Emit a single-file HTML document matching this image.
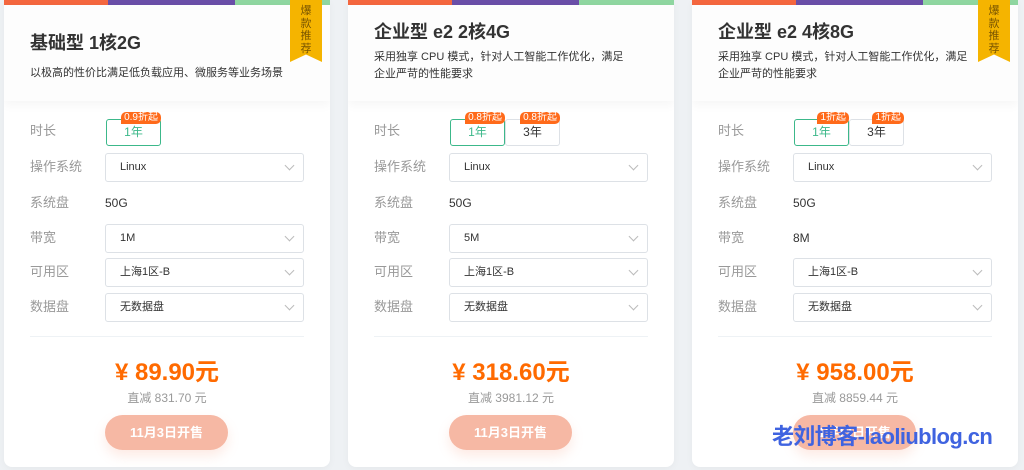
<!DOCTYPE html><html><head><meta charset="utf-8"><style>
*{margin:0;padding:0;box-sizing:border-box}
body{width:1024px;height:470px;background:#eef1f4;font-family:"Liberation Sans","Noto Sans CJK SC",sans-serif;position:relative;overflow:hidden}
.card{position:absolute;top:0;width:326px;height:467px;background:#fff;border-radius:0 0 8px 8px;box-shadow:0 2px 8px rgba(0,0,0,.04);overflow:hidden}
.stripe{position:absolute;top:0;left:0;height:5px;width:100%;background:linear-gradient(90deg,#f4673f 0 104px,#6a4fa8 104px 231px,#8fd6a0 231px)}
.head{position:absolute;top:5px;left:0;width:100%;height:96px;background:#fdfdfd;box-shadow:0 4px 10px rgba(0,0,0,.04)}
.title{position:absolute;left:26px;top:29px;font-size:18px;font-weight:bold;color:#333}
.desc{position:absolute;left:26px;width:255px;font-size:11px;line-height:17px;color:#333}
.badge{position:absolute;left:286px;top:0;width:32px;height:62px;background:#f5b400;clip-path:polygon(0 0,100% 0,100% 100%,50% 88%,0 100%);color:#7a5600;font-size:11px;line-height:12.5px;text-align:center;padding-top:5px}
.badge span{display:block}
.lab{position:absolute;left:26px;font-size:13px;color:#999}
.sel{position:absolute;left:101px;width:199px;height:29px;border:1px solid #dde1e6;border-radius:3px;font-size:11px;color:#333;line-height:27px;padding-left:14px}
.sel:after{content:"";position:absolute;right:10px;top:8px;width:6px;height:6px;border-right:1px solid #bbb;border-bottom:1px solid #bbb;transform:rotate(45deg)}
.val{position:absolute;left:101px;font-size:12px;color:#333}
.dur{position:absolute;top:119px;width:55px;height:27px;border:1px solid #dde1e6;border-radius:3px;font-size:12px;color:#333;text-align:center;line-height:25px}
.dur.on{border-color:#3cb88a;color:#3cb88a}
.tag{position:absolute;top:-8px;right:-1px;background:#ff6a1a;color:#fff;font-size:10px;line-height:12px;padding:0 3px;border-radius:5px 5px 5px 0}
.line{position:absolute;left:26px;top:336px;width:274px;height:1px;background:#eef2f5}
.price{position:absolute;top:352px;width:100%;text-align:center;font-size:24px;font-weight:bold;color:#ff6a00}
.cut{position:absolute;top:389px;width:100%;text-align:center;font-size:12px;color:#999}
.btn{position:absolute;left:101px;top:415px;width:123px;height:35px;border-radius:18px;background:#f6b8a4;color:#fff;font-size:13px;font-weight:bold;text-align:center;line-height:35px;box-shadow:0 6px 12px rgba(246,150,120,.2)}
.wm{position:absolute;left:772px;top:419px;font-size:22px;font-weight:bold;color:#3f63e0;letter-spacing:-.6px}
</style></head><body>

<div class="card" style="left:4px">
<div class="stripe"></div><div class="head"></div>
<div class="title">基础型 1核2G</div>
<div class="desc" style="top:65px">以极高的性价比满足低负载应用、微服务等业务场景</div>
<div class="badge"><span>爆</span><span>款</span><span>推</span><span>荐</span></div>
<div class="lab" style="top:120px">时长</div>
<div class="dur on" style="left:102px">1年<span class="tag">0.9折起</span></div>
<div class="lab" style="top:156px">操作系统</div><div class="sel" style="top:153px">Linux</div>
<div class="lab" style="top:192px">系统盘</div><div class="val" style="top:196px">50G</div>
<div class="lab" style="top:227px">带宽</div><div class="sel" style="top:224px">1M</div>
<div class="lab" style="top:261px">可用区</div><div class="sel" style="top:258px">上海1区-B</div>
<div class="lab" style="top:296px">数据盘</div><div class="sel" style="top:293px">无数据盘</div>
<div class="line"></div>
<div class="price">¥ 89.90元</div><div class="cut">直减 831.70 元</div>
<div class="btn">11月3日开售</div>
</div>

<div class="card" style="left:348px">
<div class="stripe"></div><div class="head"></div>
<div class="title" style="top:18px">企业型 e2 2核4G</div>
<div class="desc" style="top:49px">采用独享 CPU 模式，针对人工智能工作优化，满足企业严苛的性能要求</div>
<div class="lab" style="top:120px">时长</div>
<div class="dur on" style="left:102px">1年<span class="tag">0.8折起</span></div>
<div class="dur" style="left:157px">3年<span class="tag">0.8折起</span></div>
<div class="lab" style="top:156px">操作系统</div><div class="sel" style="top:153px">Linux</div>
<div class="lab" style="top:192px">系统盘</div><div class="val" style="top:196px">50G</div>
<div class="lab" style="top:227px">带宽</div><div class="sel" style="top:224px">5M</div>
<div class="lab" style="top:261px">可用区</div><div class="sel" style="top:258px">上海1区-B</div>
<div class="lab" style="top:296px">数据盘</div><div class="sel" style="top:293px">无数据盘</div>
<div class="line"></div>
<div class="price">¥ 318.60元</div><div class="cut">直减 3981.12 元</div>
<div class="btn">11月3日开售</div>
</div>

<div class="card" style="left:692px">
<div class="stripe"></div><div class="head"></div>
<div class="title" style="top:18px">企业型 e2 4核8G</div>
<div class="desc" style="top:49px">采用独享 CPU 模式，针对人工智能工作优化，满足企业严苛的性能要求</div>
<div class="badge"><span>爆</span><span>款</span><span>推</span><span>荐</span></div>
<div class="lab" style="top:120px">时长</div>
<div class="dur on" style="left:102px">1年<span class="tag">1折起</span></div>
<div class="dur" style="left:157px">3年<span class="tag">1折起</span></div>
<div class="lab" style="top:156px">操作系统</div><div class="sel" style="top:153px">Linux</div>
<div class="lab" style="top:192px">系统盘</div><div class="val" style="top:196px">50G</div>
<div class="lab" style="top:227px">带宽</div><div class="val" style="top:231px">8M</div>
<div class="lab" style="top:261px">可用区</div><div class="sel" style="top:258px">上海1区-B</div>
<div class="lab" style="top:296px">数据盘</div><div class="sel" style="top:293px">无数据盘</div>
<div class="line"></div>
<div class="price">¥ 958.00元</div><div class="cut">直减 8859.44 元</div>
<div class="btn">11月3日开售</div>
</div>
<div class="wm">老刘博客-laoliublog.cn</div>
</body></html>
